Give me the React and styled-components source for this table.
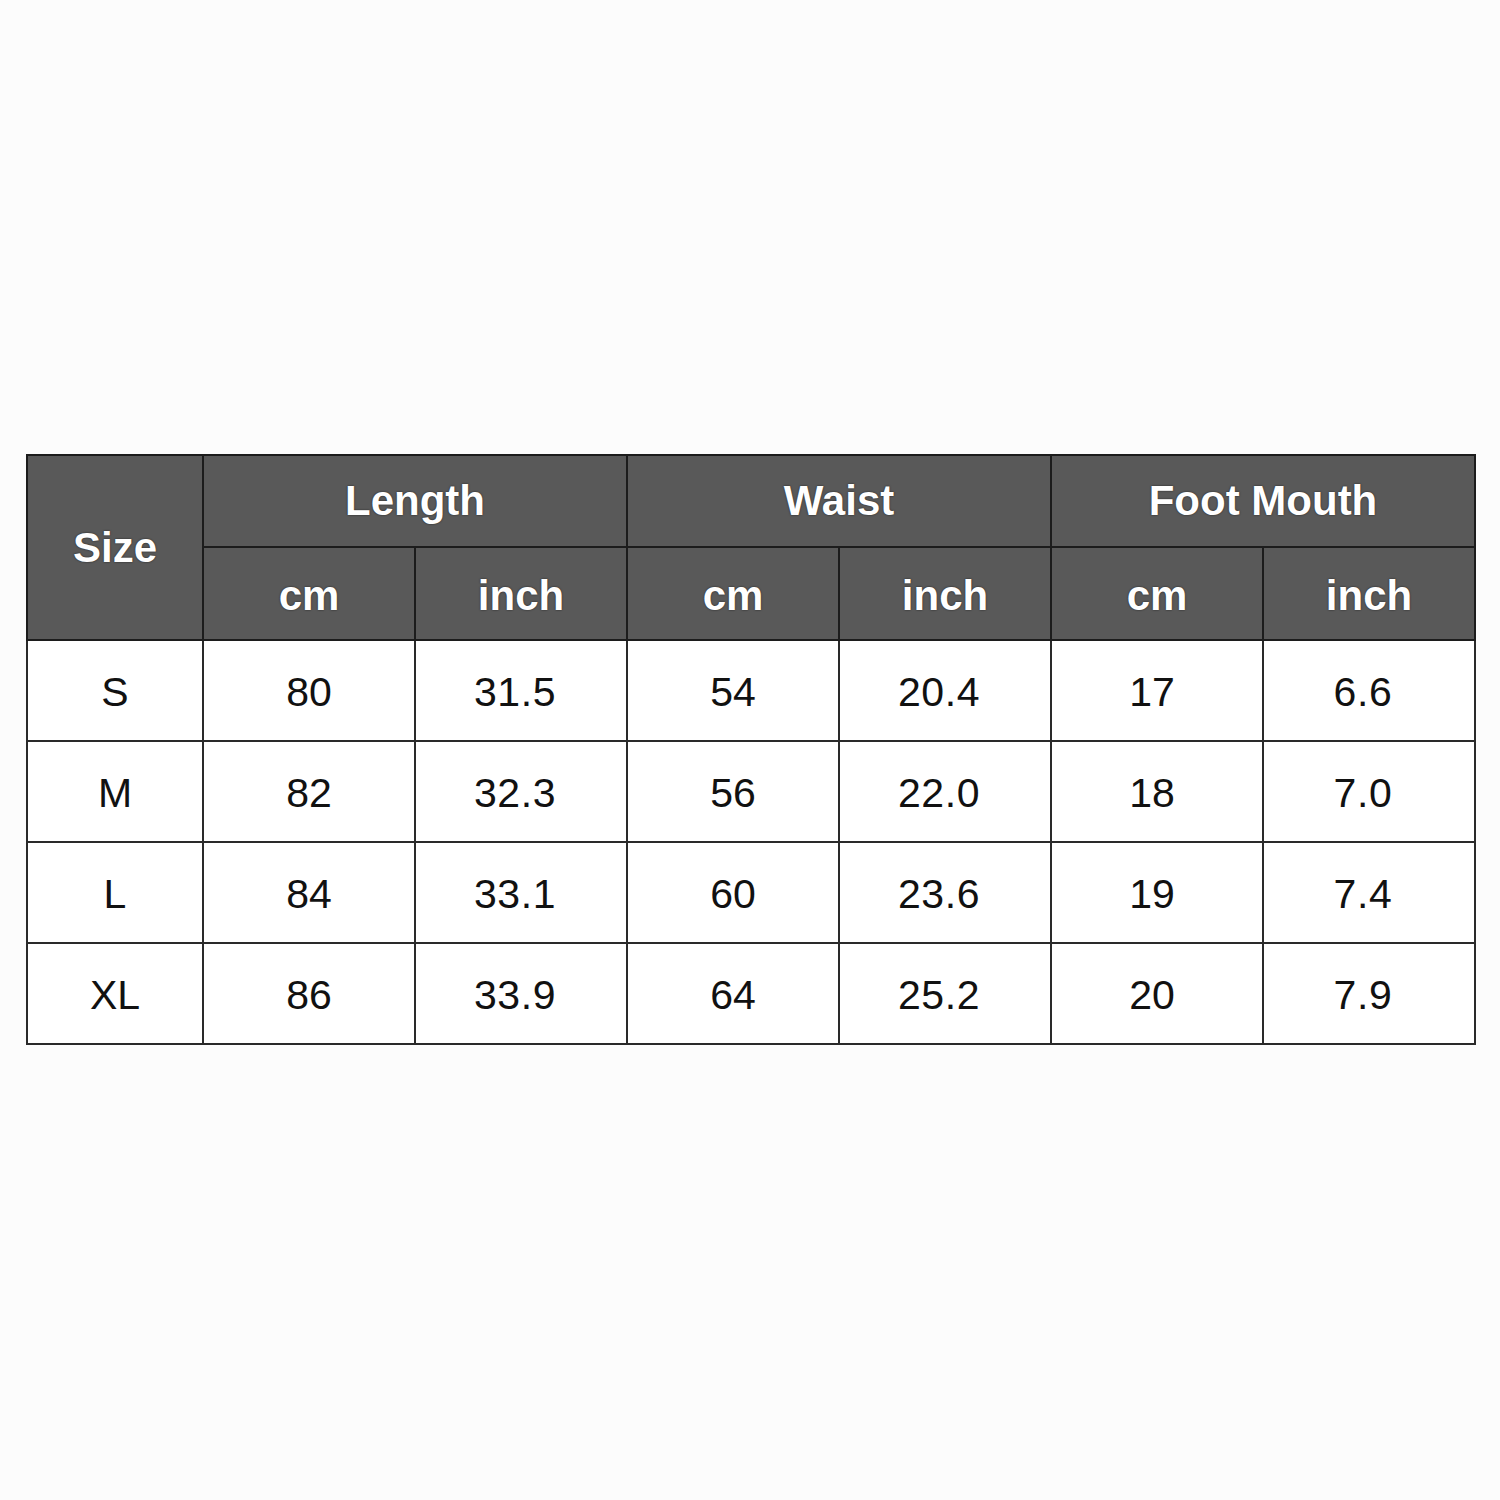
import styled, { createGlobalStyle } from 'styled-components';

const GlobalStyle = createGlobalStyle`
  html, body {
    margin: 0;
    padding: 0;
    background: #fcfcfc;
  }
  body {
    font-family: "Liberation Sans", Arial, sans-serif;
  }
`;

const Page = styled.div`
  width: 1500px;
  height: 1500px;
  padding-top: 454px;
  padding-left: 26px;
  box-sizing: border-box;
  background: #fcfcfc;
`;

const Table = styled.table`
  width: 1450px;
  border-collapse: collapse;
  table-layout: fixed;
  border: 2px solid #1c1c1c;
`;

const HeadCell = styled.th`
  background: #595959;
  color: #ffffff;
  font-size: 42px;
  font-weight: bold;
  text-align: center;
  vertical-align: middle;
  border: 2px solid #1c1c1c;
  padding: ${(p) => (p.$low ? '4px 0 0' : '0')};
  text-shadow: 0 0 2px rgba(0, 0, 0, 0.7);
`;

const Cell = styled.td`
  background: #ffffff;
  color: #111111;
  font-size: 41px;
  text-align: center;
  vertical-align: middle;
  border: 2px solid #2a2a2a;
  padding: 3px ${(p) => (p.$nudge || 0) * 2}px 0 0;
  letter-spacing: ${(p) => (p.$wide ? '0.6px' : '0')};
`;

const HeadRow = styled.tr`
  height: ${(p) => p.$h}px;
`;

const BodyRow = styled.tr`
  height: 101px;
`;

const rows = [
  ['S', '80', '31.5', '54', '20.4', '17', '6.6'],
  ['M', '82', '32.3', '56', '22.0', '18', '7.0'],
  ['L', '84', '33.1', '60', '23.6', '19', '7.4'],
  ['XL', '86', '33.9', '64', '25.2', '20', '7.9'],
];

// small leftward offsets seen in the reference, per column
const nudges = [0, 0, 6, 0, 6, 5, 6];

const groups = ['Length', 'Waist', 'Foot Mouth'];

export default function App() {
  return (
    <Page>
      <GlobalStyle />
      <Table>
        <colgroup>
          <col style={{ width: 176 }} />
          {[0, 1, 2, 3, 4, 5].map((i) => (
            <col key={i} style={{ width: 212 }} />
          ))}
        </colgroup>
        <thead>
          <HeadRow $h={92}>
            <HeadCell rowSpan={2}>Size</HeadCell>
            {groups.map((g) => (
              <HeadCell key={g} colSpan={2}>
                {g}
              </HeadCell>
            ))}
          </HeadRow>
          <HeadRow $h={93}>
            {groups.map((g) => [
              <HeadCell key={g + 'cm'} $low>
                cm
              </HeadCell>,
              <HeadCell key={g + 'in'} $low>
                inch
              </HeadCell>,
            ])}
          </HeadRow>
        </thead>
        <tbody>
          {rows.map((r) => (
            <BodyRow key={r[0]}>
              {r.map((v, i) => (
                <Cell key={i} $nudge={nudges[i]} $wide={v.includes('.')}>
                  {v}
                </Cell>
              ))}
            </BodyRow>
          ))}
        </tbody>
      </Table>
    </Page>
  );
}
